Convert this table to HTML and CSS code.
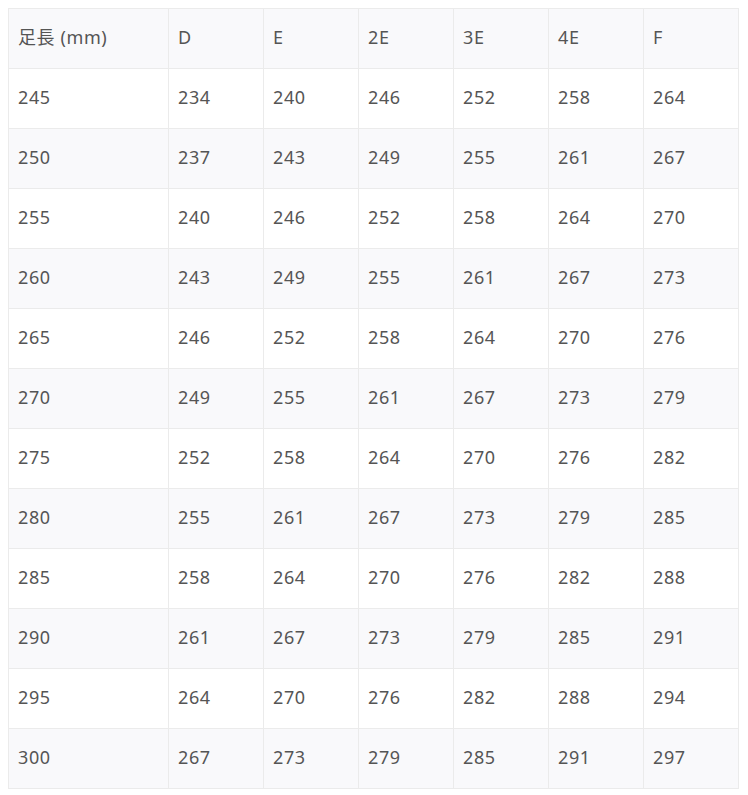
FILE: index.html
```html
<!DOCTYPE html>
<html lang="ja">
<head>
<meta charset="utf-8">
<link rel="stylesheet" href="styles.css">
</head>
<body>
<table class="size-table">
<colgroup>
<col class="c1"><col class="cn"><col class="cn"><col class="cn"><col class="cn"><col class="cn"><col class="cn">
</colgroup>
<tbody>
<tr><td>足長 (mm)</td><td>D</td><td>E</td><td>2E</td><td>3E</td><td>4E</td><td>F</td></tr>
<tr><td>245</td><td>234</td><td>240</td><td>246</td><td>252</td><td>258</td><td>264</td></tr>
<tr><td>250</td><td>237</td><td>243</td><td>249</td><td>255</td><td>261</td><td>267</td></tr>
<tr><td>255</td><td>240</td><td>246</td><td>252</td><td>258</td><td>264</td><td>270</td></tr>
<tr><td>260</td><td>243</td><td>249</td><td>255</td><td>261</td><td>267</td><td>273</td></tr>
<tr><td>265</td><td>246</td><td>252</td><td>258</td><td>264</td><td>270</td><td>276</td></tr>
<tr><td>270</td><td>249</td><td>255</td><td>261</td><td>267</td><td>273</td><td>279</td></tr>
<tr><td>275</td><td>252</td><td>258</td><td>264</td><td>270</td><td>276</td><td>282</td></tr>
<tr><td>280</td><td>255</td><td>261</td><td>267</td><td>273</td><td>279</td><td>285</td></tr>
<tr><td>285</td><td>258</td><td>264</td><td>270</td><td>276</td><td>282</td><td>288</td></tr>
<tr><td>290</td><td>261</td><td>267</td><td>273</td><td>279</td><td>285</td><td>291</td></tr>
<tr><td>295</td><td>264</td><td>270</td><td>276</td><td>282</td><td>288</td><td>294</td></tr>
<tr><td>300</td><td>267</td><td>273</td><td>279</td><td>285</td><td>291</td><td>297</td></tr>
</tbody>
</table>
</body>
</html>
```
FILE: styles.css
```css
html, body {
  margin: 0;
  padding: 0;
  background: #fff;
}
body {
  padding: 8px;
  font-family: "Noto Sans", "Noto Sans CJK JP", sans-serif;
  color: #555;
}
.size-table {
  border-collapse: collapse;
  table-layout: fixed;
  width: 730px;
}
.c1 { width: 160px; }
.cn { width: 95px; }
.size-table td {
  border: 1px solid #ebebeb;
  height: 55px;
  padding: 0 9px 4px;
  font-size: 18px;
  letter-spacing: 0.6px;
  line-height: 24px;
  vertical-align: middle;
  text-align: left;
}
.size-table tr:nth-child(odd) td {
  background: #f9f9fb;
}
```
